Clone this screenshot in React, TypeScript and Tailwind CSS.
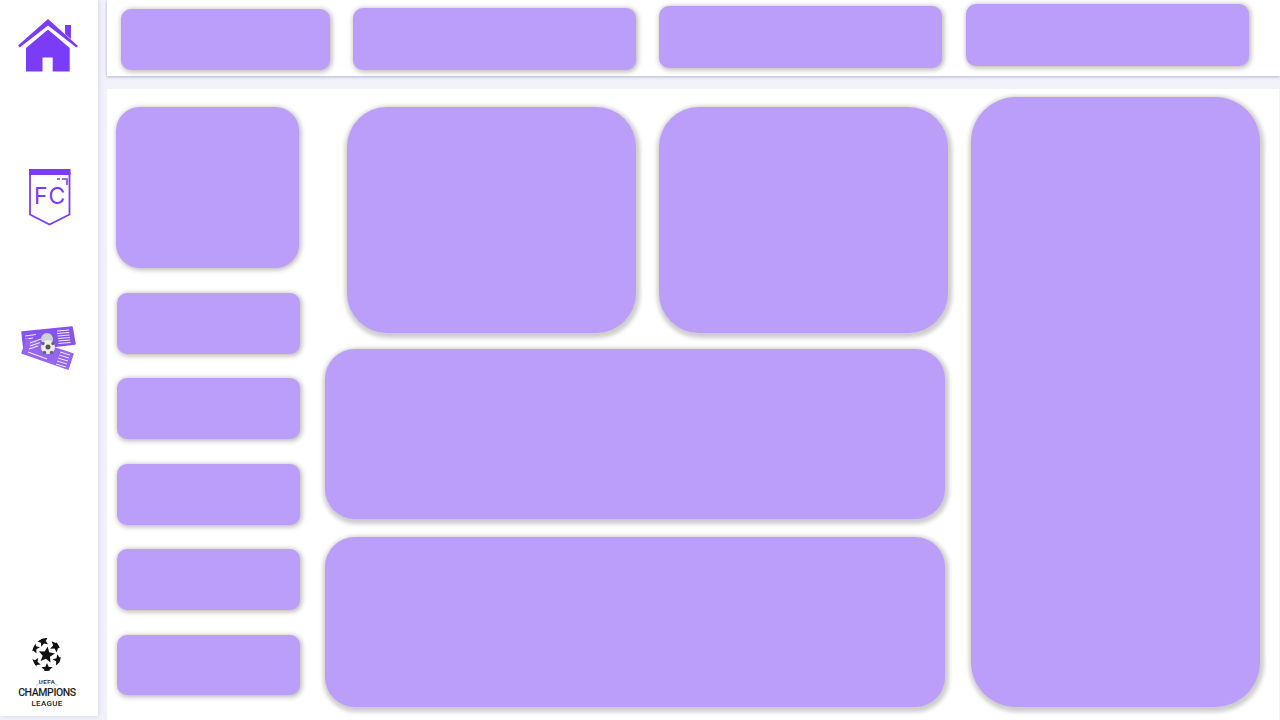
import React from "react";

const smallShadow = "shadow-[1px_1px_5px_1px_rgba(0,0,0,0.27)]";
const bigShadow = "shadow-[1px_2px_4px_3px_rgba(0,0,0,0.2)]";

function Star({ x, y, r, rot = 0 }: { x: number; y: number; r: number; rot?: number }) {
  const pts = Array.from({ length: 10 }, (_, i) => {
    const a = ((rot + i * 36 - 90) * Math.PI) / 180;
    const rr = i % 2 === 0 ? r : r * 0.45;
    return `${(x + rr * Math.cos(a)).toFixed(2)},${(y + rr * Math.sin(a)).toFixed(2)}`;
  }).join(" ");
  return <polygon points={pts} fill="#111" />;
}

function HomeIcon() {
  return (
    <svg width="62" height="56" viewBox="17 18 62 56" className="block">
      <path d="M65 25 H71 V39 L65 34 Z" fill="#7a3cf6" />
      <path d="M18 45.5 L48 19 L78 46 L76.3 47.5 L48 25.5 L19.7 47.5 Z" fill="#7a3cf6" />
      <path d="M48 29.5 L69.7 48 V71.5 H52.7 V57.5 H42.5 V71.5 H26 V48 Z" fill="#7a3cf6" />
    </svg>
  );
}

function ShieldIcon() {
  return (
    <svg width="44" height="58" viewBox="28 168 44 58" className="block">
      <path d="M30 172 V214.5 L49.5 224.5 L69.5 214.5 V172" fill="none" stroke="#7a3cf6" strokeWidth="1.8" />
      <rect x="29" y="169" width="41.5" height="6" fill="#7a3cf6" />
      <path d="M57 179 H60 M62 179 H67 V185" fill="none" stroke="#7a3cf6" strokeWidth="1.6" />
      <text x="34" y="204" fontFamily="Inter, sans-serif" fontWeight="400" fontSize="23" letterSpacing="0.8" fill="#7a3cf6">FC</text>
    </svg>
  );
}

function TicketIcon() {
  const line = "#f0e9fe";
  return (
    <svg width="56" height="46" viewBox="20 325 56 46" className="block">
      <polygon points="22,332 72,327 75,344 24,350" fill="#8554ee" stroke="#8554ee" strokeWidth="1.5" strokeLinejoin="round" />
      <circle cx="47" cy="339" r="6" fill="#cfcfd6" />
      <path d="M57 331 L69 330 M57 333.5 L69.3 332.5 M57.5 336 L69.6 335 M58 338.5 L70 337.5 M58.3 341 L70.3 340 M58.5 343.5 L70.6 342.5" stroke={line} strokeWidth="1" />
      <path d="M25 336 L36 334.5 M25.5 339 L33 338" stroke={line} strokeWidth="1" />
      <polygon points="27,339 73,354 68,369 22,353" fill="#9465f3" stroke="#9465f3" strokeWidth="1.5" strokeLinejoin="round" />
      <path d="M30 343 L41 339 M30 346 L40 342.5 M29 349 L38 346" stroke={line} strokeWidth="1.1" />
      <path d="M28 352 L47 359" stroke={line} strokeWidth="1.1" />
      <path d="M60 352 L70 355 M59 355 L69 358 M58 358 L68 361 M57 361 L67 364 M56 364 L66 367" stroke={line} strokeWidth="1" />
      <circle cx="48" cy="347" r="7" fill="#ececec" />
      <circle cx="48" cy="347" r="2.5" fill="#555" />
      <circle cx="43" cy="343.5" r="1.7" fill="#666" />
      <circle cx="53" cy="343.5" r="1.7" fill="#666" />
      <circle cx="44.5" cy="352.5" r="1.7" fill="#666" />
      <circle cx="51.5" cy="352.5" r="1.7" fill="#666" />
    </svg>
  );
}

function ChampionsLogo() {
  return (
    <div className="flex flex-col items-center w-[60px]">
      <svg width="30" height="34" viewBox="32 638 30 34" className="block">
        <defs>
          <clipPath id="ball">
            <ellipse cx="46.5" cy="654.5" rx="14.5" ry="16.5" />
          </clipPath>
        </defs>
        <g clipPath="url(#ball)">
          <Star x={46.5} y={655} r={8.5} rot={8} />
          <Star x={43} y={641} r={6} rot={-20} />
          <Star x={56} y={646} r={6.5} rot={30} />
          <Star x={58.5} y={660} r={6} rot={60} />
          <Star x={47} y={669} r={6} rot={0} />
          <Star x={35} y={663} r={6} rot={-40} />
          <Star x={34} y={648} r={6} rot={-60} />
        </g>
      </svg>
      <svg width="26" height="13" viewBox="0 0 26 13" className="block mt-[2px]">
        <path d="M2 12 Q13 0 24 12" fill="none" stroke="#888" strokeWidth="0.5" />
        <text x="13" y="10" textAnchor="middle" fontFamily="'Liberation Sans', sans-serif" fontWeight="700" fontSize="5.5" fill="#333" letterSpacing="0.5">UEFA</text>
      </svg>
      <span className="block text-[10.5px] leading-[11px] font-medium text-[#222] whitespace-nowrap font-['Roboto',sans-serif] tracking-[-0.4px]">CHAMPIONS</span>
      <span className="block mt-[1px] text-[8px] leading-[9px] font-medium text-[#222] whitespace-nowrap font-['Roboto',sans-serif] tracking-[0.3px]">LEAGUE</span>
    </div>
  );
}

export default function App() {
  return (
    <div className="flex w-[1280px] h-[720px] overflow-hidden bg-[#f2f2fb] font-['Liberation_Sans',sans-serif]">
      <aside className="flex flex-col w-[98px] h-[716px] bg-white shadow-[1px_0_5px_rgba(90,80,170,0.18)]">
        <div className="ml-[17px] mt-[18px]"><HomeIcon /></div>
        <div className="ml-[28px] mt-[94px]"><ShieldIcon /></div>
        <div className="ml-[20px] mt-[99px]"><TicketIcon /></div>
        <div className="ml-[17px] mt-auto mb-[8px]"><ChampionsLogo /></div>
      </aside>

      <div className="flex flex-col ml-[9px] w-[1173px]">
        <header className="flex items-start h-[76px] bg-white shadow-[0_1px_3px_rgba(70,60,130,0.35)]">
          <div className={`ml-[14px] mt-[9px] w-[209px] h-[61px] rounded-[10px] bg-[#bb9efa] ${smallShadow}`} />
          <div className={`ml-[23px] mt-[8px] w-[283px] h-[62px] rounded-[10px] bg-[#bb9efa] ${smallShadow}`} />
          <div className={`ml-[23px] mt-[6px] w-[283px] h-[62px] rounded-[10px] bg-[#bb9efa] ${smallShadow}`} />
          <div className={`ml-[24px] mt-[4px] w-[283px] h-[62px] rounded-[10px] bg-[#bb9efa] ${smallShadow}`} />
        </header>

        <main className="flex items-start mt-[13px] w-[1172px] h-[631px] bg-white">
          <div className="flex flex-col w-[193px]">
            <div className={`ml-[9px] mt-[18px] w-[183px] h-[161px] rounded-[24px] bg-[#bb9efa] ${smallShadow}`} />
            <div className={`ml-[10px] mt-[25px] w-[183px] h-[61px] rounded-[10px] bg-[#bb9efa] ${smallShadow}`} />
            <div className={`ml-[10px] mt-[24px] w-[183px] h-[61px] rounded-[10px] bg-[#bb9efa] ${smallShadow}`} />
            <div className={`ml-[10px] mt-[25px] w-[183px] h-[61px] rounded-[10px] bg-[#bb9efa] ${smallShadow}`} />
            <div className={`ml-[10px] mt-[24px] w-[183px] h-[61px] rounded-[10px] bg-[#bb9efa] ${smallShadow}`} />
            <div className={`ml-[10px] mt-[25px] w-[183px] h-[60px] rounded-[10px] bg-[#bb9efa] ${smallShadow}`} />
          </div>

          <div className="flex flex-col ml-[25px] w-[623px] mt-[18px]">
            <div className="flex ml-[22px] gap-[23px]">
              <div className={`w-[289px] h-[226px] rounded-[40px] bg-[#bb9efa] ${bigShadow}`} />
              <div className={`w-[289px] h-[226px] rounded-[40px] bg-[#bb9efa] ${bigShadow}`} />
            </div>
            <div className={`mt-[16px] w-[620px] h-[170px] rounded-[30px] bg-[#bb9efa] ${bigShadow}`} />
            <div className={`mt-[18px] w-[620px] h-[170px] rounded-[30px] bg-[#bb9efa] ${bigShadow}`} />
          </div>

          <div className={`ml-[23px] mt-[8px] w-[289px] h-[610px] rounded-[45px] bg-[#bb9efa] ${bigShadow}`} />
        </main>
      </div>
    </div>
  );
}
